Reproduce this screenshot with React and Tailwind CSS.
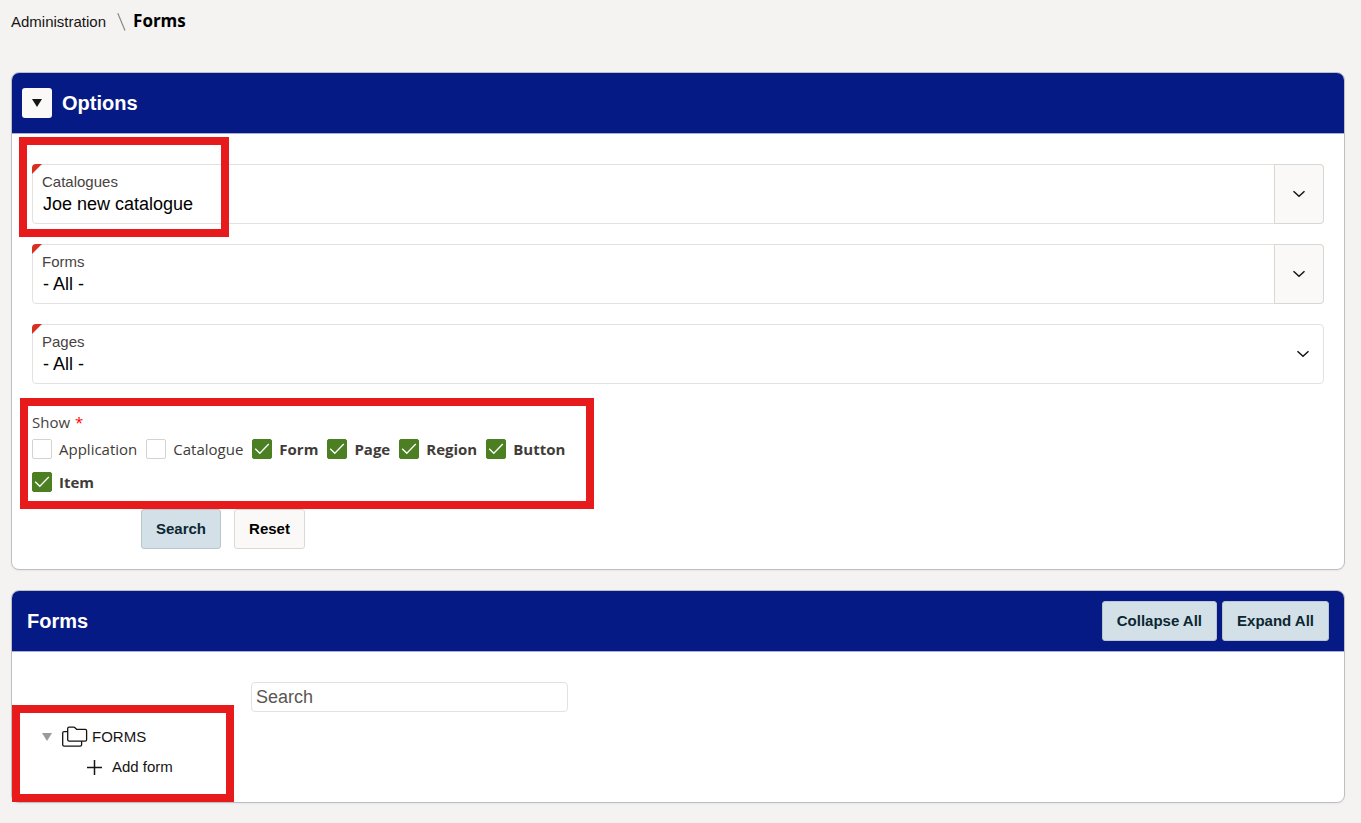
import React from "react";

const humanist = "font-['Open_Sans','Noto_Sans',sans-serif]";

function Highlight({ className }) {
  return (
    <span
      aria-hidden="true"
      className={`pointer-events-none absolute border-8 border-[#e71b1b] ${className}`}
    />
  );
}

function Chevron({ className = "" }) {
  return (
    <svg width="14" height="8" viewBox="0 0 14 8" aria-hidden="true" className={className}>
      <path d="M1.5 1.2 7 6.2l5.500-5" fill="none" stroke="#161513" strokeWidth="1.5" />
    </svg>
  );
}

function RequiredCorner() {
  return (
    <svg width="10" height="10" viewBox="0 0 10 10" aria-hidden="true" className="absolute -top-px -left-px">
      <path d="M0 10V4a4 4 0 0 1 4-4h6z" fill="#d63020" />
    </svg>
  );
}

function PopupField({ id, label, value, children }) {
  return (
    <div className="relative flex h-[60px] rounded border border-[#e4e2e0]">
      <RequiredCorner />
      <div className="flex min-w-0 flex-1 flex-col gap-px pt-2 pl-[9px]">
        <label htmlFor={id} className="text-[15px] leading-[18px] text-[#47423f]">
          {label}
        </label>
        <input
          id={id}
          defaultValue={value}
          className="h-6 w-full bg-transparent pl-px text-[18px] leading-6 text-black outline-none"
        />
      </div>
      <button
        type="button"
        aria-label={`Choose ${label}`}
        className="-m-px flex w-[50px] items-center justify-center rounded-r border border-[#d9d7d5] bg-[#faf9f8]"
      >
        <Chevron />
      </button>
      {children}
    </div>
  );
}

function CheckItem({ label, checked }) {
  return (
    <label className="flex items-center gap-[7px]">
      <span className="relative flex size-5">
        <input
          type="checkbox"
          defaultChecked={checked}
          className="peer size-5 appearance-none rounded-[2px] border border-[#d5d3d1] bg-white checked:border-[#4c7f22] checked:bg-[#4c7f22]"
        />
        <svg
          viewBox="0 0 20 20"
          aria-hidden="true"
          className="pointer-events-none absolute inset-0 hidden size-5 peer-checked:block"
        >
          <path d="m3.200 9.700 4.600 4.600 9-9.300" fill="none" stroke="#fff" strokeWidth="1.300" />
        </svg>
      </span>
      <span className={`${humanist} text-[15px] leading-5 text-[#403c39] ${checked ? "font-bold" : ""}`}>{label}</span>
    </label>
  );
}

function Button({ primary, children }) {
  return (
    <button
      type="button"
      className={`h-10 rounded-[3px] border px-[14px] text-[15px] leading-5 font-bold ${
        primary ? "border-[#b9c6cd] bg-[#d3e0e7] text-[#0b2733]" : "border-[#dbd9d7] bg-[#faf9f8] text-black"
      }`}
    >
      {children}
    </button>
  );
}

const showItems = [
  ["Application", false],
  ["Catalogue", false],
  ["Form", true],
  ["Page", true],
  ["Region", true],
  ["Button", true],
  ["Item", true],
];

export default function App() {
  return (
    <div className="min-h-screen bg-[#f4f3f1] pr-4 pb-5 pl-[11px] font-['Liberation_Sans',Arial,sans-serif] text-[#161513]">
      <nav aria-label="Breadcrumb" className="flex h-[72px] items-start pt-[11px]">
        <a href="#administration" className="text-[15px] leading-[22px]">
          Administration
        </a>
        <svg width="9" height="18" viewBox="0 0 9 18" aria-hidden="true" className="mt-[2px] ml-[11px]">
          <path d="m.8.300 7.200 17.200" stroke="#8a8886" strokeWidth="1.200" fill="none" />
        </svg>
        <h1 className={`${humanist} ml-[7px] text-[17px] leading-5 font-bold text-black`}>Forms</h1>
      </nav>

      <main className="flex flex-col gap-5">
        <section className="rounded-lg border border-[#bdbfc3] bg-white shadow-xs">
          <header className="flex h-[61px] items-center gap-[10px] rounded-t-[7px] border-b border-[#a9aed0] bg-[#061a86] px-[10px]">
            <button
              type="button"
              aria-label="Toggle options"
              className="flex size-[30px] items-center justify-center rounded-[3px] bg-[#faf9f8]"
            >
              <svg width="10" height="8" viewBox="0 0 10 8" aria-hidden="true">
                <path d="M0 0h10L5 8z" fill="#161513" />
              </svg>
            </button>
            <h2 className="text-[20px] leading-6 font-bold text-white">Options</h2>
          </header>

          <form className="px-5 pt-[30px] pb-5">
            <div className="flex flex-col gap-5">
              <PopupField id="catalogues" label="Catalogues" value="Joe new catalogue">
                <Highlight className="-top-7 -left-[14px] h-[100px] w-[210px]" />
              </PopupField>
              <PopupField id="forms" label="Forms" value="- All -" />
              <div className="relative flex h-[60px] flex-col gap-px rounded border border-[#e4e2e0] pt-2 pl-[9px]">
                <RequiredCorner />
                <label htmlFor="pages" className="text-[15px] leading-[18px] text-[#47423f]">
                  Pages
                </label>
                <select
                  id="pages"
                  className="h-6 w-full appearance-none bg-transparent pl-px text-[18px] leading-6 text-black outline-none"
                >
                  <option>- All -</option>
                </select>
                <Chevron className="pointer-events-none absolute top-[25px] right-[13px]" />
              </div>
            </div>

            <div className="relative mt-7 max-w-[550px]">
              <fieldset>
                <legend className={`${humanist} text-[15px] leading-5 text-[#47423f]`}>
                  Show <span className="ml-px text-[#f00]">*</span>
                </legend>
                <div className="mt-[7px] flex flex-wrap gap-x-[9px] gap-y-[13px]">
                  {showItems.map(([label, checked]) => (
                    <CheckItem key={label} label={label} checked={checked} />
                  ))}
                </div>
              </fieldset>
              <Highlight className="-top-[14px] -right-3 -bottom-[17px] -left-3" />
            </div>

            <div className="mt-[17px] ml-[109px] flex gap-[13px]">
              <Button primary>Search</Button>
              <Button>Reset</Button>
            </div>
          </form>
        </section>

        <section className="rounded-lg border border-[#bdbfc3] bg-white shadow-xs">
          <header className="flex h-[61px] items-center justify-between rounded-t-[7px] border-b border-[#a9aed0] bg-[#061a86] px-[15px]">
            <h2 className="text-[20px] leading-6 font-bold text-white">Forms</h2>
            <div className="flex gap-[5px]">
              <Button primary>Collapse All</Button>
              <Button primary>Expand All</Button>
            </div>
          </header>

          <div className="px-5 pt-[30px] pb-5">
            <input
              type="search"
              aria-label="Search"
              placeholder="Search"
              className="ml-[219px] block h-[30px] w-[317px] rounded border border-[#e4e2e0] px-1 text-[18px] text-black outline-none placeholder:text-[#5b5652]"
            />
            <div className="relative mt-[10px] w-[190px] text-[15px]">
              <ul>
                <li>
                  <div className="flex h-[30px] items-center pl-[10px]">
                    <svg width="10" height="8" viewBox="0 0 10 8" aria-hidden="true">
                      <path d="M0 0h10L5 8z" fill="#9b9b9b" />
                    </svg>
                    <svg
                      width="26"
                      height="22"
                      viewBox="0 0 26 22"
                      aria-hidden="true"
                      className="ml-[10px]"
                      fill="none"
                      stroke="#161513"
                      strokeWidth="1.300"
                      strokeLinejoin="round"
                    >
                      <path d="M5.700 2.600q0-1.400 1.400-1.400h4.700q.700 0 1.200.500l1.600 1.600h8.600q1.400 0 1.400 1.400v9q0 1.400-1.400 1.400H7.100q-1.400 0-1.400-1.400z" />
                      <path d="M5.700 5.600H2.100Q.700 5.600.700 7v11.800q0 1.400 1.400 1.400h16.100q1.400 0 1.400-1.400v-3.700" />
                    </svg>
                    <span className="ml-1">FORMS</span>
                  </div>
                  <ul>
                    <li className="flex h-[30px] items-center pl-[55px]">
                      <svg width="15" height="15" viewBox="0 0 15 15" aria-hidden="true">
                        <path d="M7.500 0v15M0 7.500h15" stroke="#161513" strokeWidth="1.500" />
                      </svg>
                      <a href="#add-form" className="ml-[10px]">
                        Add form
                      </a>
                    </li>
                  </ul>
                </li>
              </ul>
              <Highlight className="-top-[17px] -right-3 -bottom-5 -left-5" />
            </div>
          </div>
        </section>
      </main>
    </div>
  );
}
